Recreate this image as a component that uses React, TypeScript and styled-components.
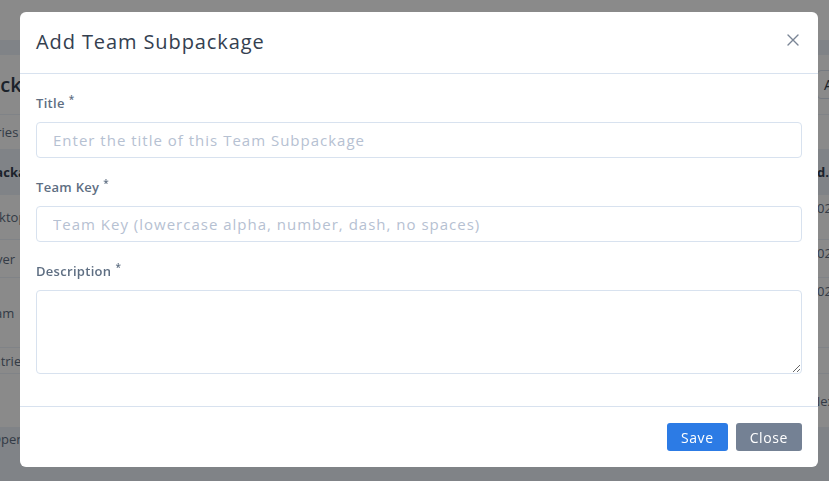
import React from "react";
import styled, { createGlobalStyle } from "styled-components";

const GlobalStyle = createGlobalStyle`
  html, body {
    margin: 0;
    padding: 0;
    background: #edf2f9;
    font-family: "Open Sans", "Liberation Sans", sans-serif;
    overflow: hidden;
  }
  * { box-sizing: border-box; }
`;

/* ---------- page behind the modal ---------- */

const Page = styled.div`
  width: 829px;
  height: 481px;
  overflow: hidden;
  color: #344050;
`;

const Navbar = styled.div`
  height: 40px;
  background: #fff;
`;

const Card = styled.div`
  margin: 15px -60px 0 -80px;
  background: #fff;
  font-size: 13px;
`;

const CardHeader = styled.div`
  height: 60px;
  padding-left: 20px;
  display: flex;
  align-items: center;
  justify-content: space-between;
  border-bottom: 1px solid #edf2f9;
`;

const PageTitle = styled.h2`
  margin: 0;
  font-size: 20px;
  font-weight: 600;
  color: #344050;
`;

const OutlineButton = styled.div`
  width: 72px;
  border: 1px solid #d8e2ef;
  border-radius: 4px;
  padding: 4px 6px;
  font-size: 14px;
  color: #344050;
`;

const Toolbar = styled.div<{ $indent?: number; $h?: number }>`
  height: ${(p) => p.$h ?? 35}px;
  display: flex;
  align-items: center;
  padding-left: ${(p) => p.$indent ?? 20}px;
  white-space: nowrap;
  color: #5e6e82;
  border-bottom: 1px solid #edf2f9;
`;

const Table = styled.div`
  display: grid;
  grid-template-columns: 1fr 72px;
`;

const Cell = styled.div<{ $head?: boolean; $h: number; $top?: boolean; $indent?: number }>`
  height: ${(p) => p.$h}px;
  display: flex;
  align-items: ${(p) => (p.$top ? "flex-start" : "center")};
  padding-top: ${(p) => (p.$top ? "4px" : "0")};
  padding-left: ${(p) => p.$indent ?? 20}px;
  white-space: nowrap;
  overflow: hidden;
  font-weight: ${(p) => (p.$head ? 700 : 400)};
  color: ${(p) => (p.$head ? "#344050" : "#5e6e82")};
  background: ${(p) => (p.$head ? "#edf2f9" : "#fff")};
  border-bottom: 1px solid #edf2f9;
`;

const Pager = styled.div`
  height: 53px;
  display: flex;
  align-items: center;
  justify-content: flex-end;
  padding-right: 50px;
  color: #5e6e82;
`;

const Footer = styled.div`
  padding-top: 3px;
  margin-left: -9px;
  font-size: 13px;
  color: #5e6e82;
  white-space: nowrap;
`;

/* ---------- modal ---------- */

const Backdrop = styled.div`
  position: fixed;
  inset: 0;
  background: rgba(0, 0, 0, 0.46);
  padding: 12px 11px 0 20px;
`;

const Dialog = styled.div`
  width: 798px;
  height: 455px;
  background: #fff;
  border-radius: 6px;
  display: flex;
  flex-direction: column;
  font-family: "Open Sans", "Liberation Sans", sans-serif;
`;

const ModalHeader = styled.div`
  height: 62px;
  padding: 0 16px 3px;
  display: flex;
  align-items: center;
  justify-content: space-between;
  border-bottom: 1px solid #d8e2ef;
`;

const ModalTitle = styled.h5`
  margin: 0;
  font-size: 20px;
  font-weight: 500;
  letter-spacing: 0.9px;
  color: #344050;
`;

const CloseX = styled.button`
  border: 0;
  background: none;
  padding: 0;
  margin: 0 2px 2px 0;
  width: 14px;
  height: 14px;
  display: flex;
  color: #7a8595;
`;

const ModalBody = styled.div`
  flex: 1;
  padding: 19px 16px 0;
`;

const Group = styled.div`
  margin-bottom: 19px;
`;

const Label = styled.label`
  display: block;
  height: 20px;
  line-height: 20px;
  margin-bottom: 9px;
  font-size: 13px;
  font-weight: 600;
  letter-spacing: 0.3px;
  color: #5e6e82;
`;

const Star = styled.span`
  position: relative;
  top: -5px;
  font-size: 10px;
  margin-left: 4px;
`;

const Input = styled.input`
  display: block;
  width: 100%;
  height: 36px;
  padding: 0 16px;
  border: 1px solid #d8e2ef;
  border-radius: 4px;
  font-family: inherit;
  font-size: 15px;
  letter-spacing: 1px;
  color: #344050;
  outline: none;
  &::placeholder {
    color: #b6c1d2;
  }
`;

const TextArea = styled.textarea`
  display: block;
  width: 100%;
  height: 84px;
  padding: 8px 16px;
  border: 1px solid #d8e2ef;
  border-radius: 4px;
  font-family: inherit;
  font-size: 15px;
  outline: none;
  resize: vertical;
`;

const ModalFooter = styled.div`
  height: 61px;
  padding: 0 16px;
  display: flex;
  align-items: center;
  justify-content: flex-end;
  gap: 8px;
  border-top: 1px solid #d8e2ef;
`;

const Button = styled.button<{ $variant: "primary" | "secondary" }>`
  height: 28px;
  padding: 0 14px;
  border: 0;
  border-radius: 3px;
  font-family: inherit;
  font-size: 14px;
  font-weight: 500;
  letter-spacing: 0.6px;
  color: #fff;
  background: ${(p) => (p.$variant === "primary" ? "#2c7be5" : "#748194")};
`;

const rows = [
  { name: "Linux Desktop", date: "02/05/2024", h: 45, indent: 20 },
  { name: "Linux Server", date: "02/05/2024", h: 38, indent: 20 },
  { name: "Default Team", date: "02/05/2024", h: 70, indent: 13 },
];

export default function App() {
  return (
    <>
      <GlobalStyle />
      <Page>
        <Navbar />
        <Card>
          <CardHeader>
            <PageTitle>Subpackages</PageTitle>
            <OutlineButton>Add</OutlineButton>
          </CardHeader>
          <Toolbar>Show entries</Toolbar>
          <Table>
            <Cell $head $h={45} $indent={4}>Team Subpackage</Cell>
            <Cell $head $h={45} $indent={0}>d.</Cell>
            {rows.map((r) => (
              <React.Fragment key={r.name}>
                <Cell $h={r.h} $indent={r.indent}>{r.name}</Cell>
                <Cell $h={r.h} $top $indent={0}>{r.date}</Cell>
              </React.Fragment>
            ))}
          </Table>
          <Toolbar $indent={39} $h={26}>of 3 entries</Toolbar>
          <Pager>Next</Pager>
        </Card>
        <Footer>OpenKM Professional | © 2017-2024 OpenKM Knowledge Management System SL. All rights reserved</Footer>
      </Page>

      <Backdrop>
        <Dialog>
          <ModalHeader>
            <ModalTitle>Add Team Subpackage</ModalTitle>
            <CloseX aria-label="Close">
              <svg width="14" height="14" viewBox="0 0 14 14">
                <path d="M2 2 L12 12 M12 2 L2 12" stroke="currentColor" strokeWidth="1.4" strokeLinecap="round" />
              </svg>
            </CloseX>
          </ModalHeader>
          <ModalBody>
            <Group>
              <Label>Title<Star>*</Star></Label>
              <Input placeholder="Enter the title of this Team Subpackage" />
            </Group>
            <Group>
              <Label>Team Key<Star>*</Star></Label>
              <Input placeholder="Team Key (lowercase alpha, number, dash, no spaces)" />
            </Group>
            <Group>
              <Label>Description<Star>*</Star></Label>
              <TextArea />
            </Group>
          </ModalBody>
          <ModalFooter>
            <Button $variant="primary">Save</Button>
            <Button $variant="secondary">Close</Button>
          </ModalFooter>
        </Dialog>
      </Backdrop>
    </>
  );
}
